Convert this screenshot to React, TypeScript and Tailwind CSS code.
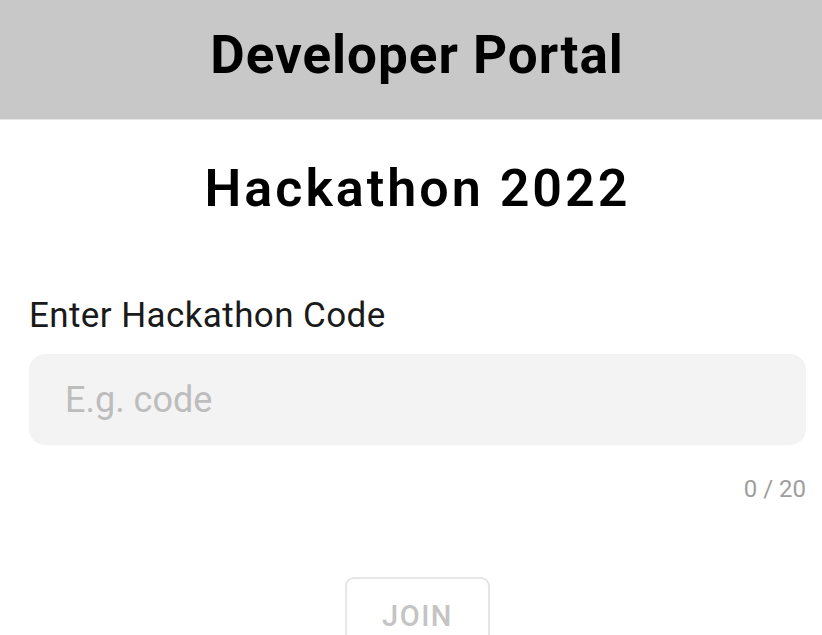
export default function App() {
  return (
    <div className="w-[822px] h-[635px] overflow-hidden bg-white font-['Roboto',sans-serif]">
      {/* Header */}
      <header className="h-[120px] bg-[#c8c8c8] border-b border-[#e6e6e6] flex items-center justify-center pl-[12px] pb-[8px]">
        <h1 className="text-[53px] leading-none font-bold tracking-[1px] text-black">Developer Portal</h1>
      </header>

      <main className="pl-[29px] pr-[16px]">
        <h2 className="mt-[43px] text-center text-[52px] leading-none font-semibold tracking-[3px] text-black">
          Hackathon 2022
        </h2>

        <label className="block mt-[83px] text-[35px] leading-none tracking-[0.4px] text-[#1a1a1a]">
          Enter Hackathon Code
        </label>

        <div className="mt-[21px] h-[91px] rounded-[16px] bg-[#f3f3f3] flex items-center px-[36px]">
          <span className="text-[36px] text-[#bdbdbd]">E.g. code</span>
        </div>

        <div className="mt-[32px] text-right text-[24px] leading-none text-[#9e9e9e]">0 / 20</div>

        <div className="flex justify-center mt-[76px]">
          <button className="w-[145px] h-[80px] shrink-0 rounded-[9px] border-2 border-[#e6e6e6] text-[29px] leading-none font-medium tracking-[1.5px] text-[#c4c4c4] flex items-start justify-center pt-[23px]">
            JOIN
          </button>
        </div>
      </main>
    </div>
  );
}
